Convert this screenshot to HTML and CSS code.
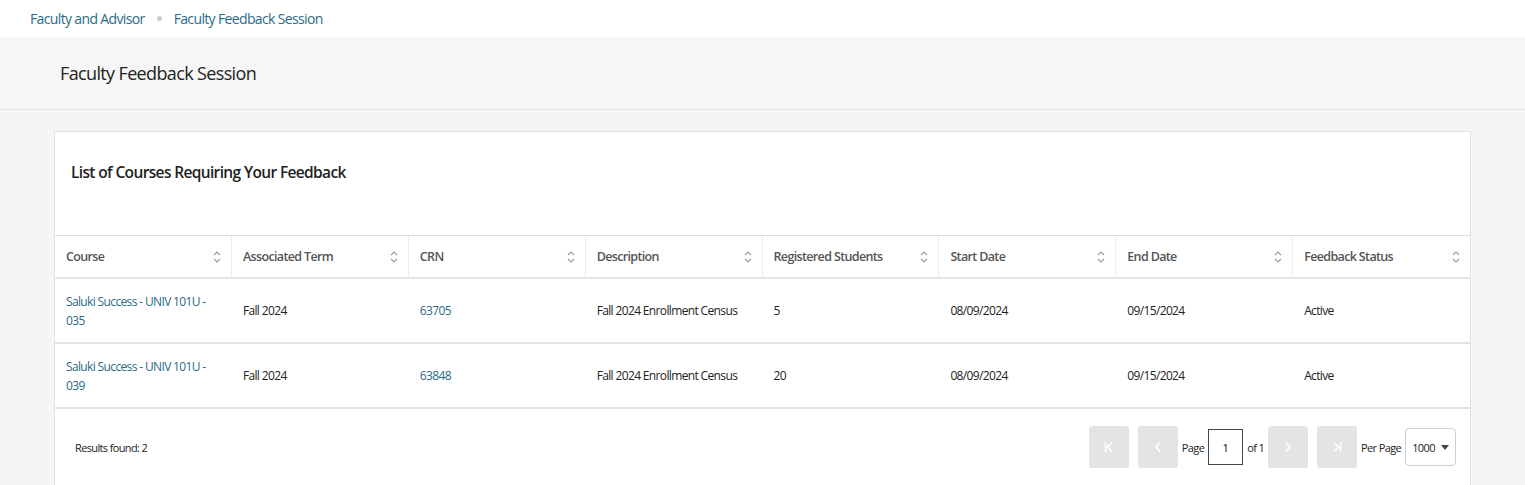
FILE: index.html
```html
<!DOCTYPE html>
<html lang="en">
<head>
    <meta charset="UTF-8">
    <meta name="viewport" content="width=device-width, initial-scale=1.0">
    <title>Faculty Feedback Session</title>
    <link rel="stylesheet" href="styles.css">
</head>
<body>
    <nav class="breadcrumb">
        <a href="#" class="crumb">Faculty and Advisor</a>
        <span class="crumb-dot"></span>
        <span class="crumb">Faculty Feedback Session</span>
    </nav>

    <header class="page-header">
        <h1 class="page-title">Faculty Feedback Session</h1>
    </header>

    <main class="content">
        <section class="card">
            <div class="card-header">
                <h2 class="card-title">List of Courses Requiring Your Feedback</h2>
            </div>

            <table class="grid">
                <thead>
                    <tr>
                        <th><div class="th-inner">Course<span class="sort"></span></div></th>
                        <th><div class="th-inner">Associated Term<span class="sort"></span></div></th>
                        <th><div class="th-inner">CRN<span class="sort"></span></div></th>
                        <th><div class="th-inner">Description<span class="sort"></span></div></th>
                        <th><div class="th-inner">Registered Students<span class="sort"></span></div></th>
                        <th><div class="th-inner">Start Date<span class="sort"></span></div></th>
                        <th><div class="th-inner">End Date<span class="sort"></span></div></th>
                        <th><div class="th-inner last">Feedback Status<span class="sort"></span></div></th>
                    </tr>
                </thead>
                <tbody>
                    <tr>
                        <td><a href="#" class="link">Saluki Success - UNIV 101U - 035</a></td>
                        <td>Fall 2024</td>
                        <td><a href="#" class="link">63705</a></td>
                        <td>Fall 2024 Enrollment Census</td>
                        <td>5</td>
                        <td>08/09/2024</td>
                        <td>09/15/2024</td>
                        <td>Active</td>
                    </tr>
                    <tr>
                        <td><a href="#" class="link">Saluki Success - UNIV 101U - 039</a></td>
                        <td>Fall 2024</td>
                        <td><a href="#" class="link">63848</a></td>
                        <td>Fall 2024 Enrollment Census</td>
                        <td>20</td>
                        <td>08/09/2024</td>
                        <td>09/15/2024</td>
                        <td>Active</td>
                    </tr>
                </tbody>
            </table>

            <div class="card-footer">
                <span class="results">Results found: 2</span>
                <div class="pager">
                    <button class="pg-btn" disabled>
                        <svg width="10" height="12" viewBox="0 0 10 12"><path d="M1.5 1v10M8 1.5L3.5 6L8 10.5" fill="none" stroke="#fff" stroke-width="1.6"/></svg>
                    </button>
                    <button class="pg-btn" disabled>
                        <svg width="8" height="12" viewBox="0 0 8 12"><path d="M6 1.5L2 6l4 4.5" fill="none" stroke="#fff" stroke-width="1.6"/></svg>
                    </button>
                    <span class="pg-label">Page</span>
                    <input type="text" class="pg-input" value="1">
                    <span class="pg-label">of 1</span>
                    <button class="pg-btn" disabled>
                        <svg width="8" height="12" viewBox="0 0 8 12"><path d="M2 1.5L6 6l-4 4.5" fill="none" stroke="#fff" stroke-width="1.6"/></svg>
                    </button>
                    <button class="pg-btn" disabled>
                        <svg width="10" height="12" viewBox="0 0 10 12"><path d="M8.5 1v10M2 1.5L6.5 6L2 10.5" fill="none" stroke="#fff" stroke-width="1.6"/></svg>
                    </button>
                    <span class="pg-label">Per Page</span>
                    <div class="pg-select">1000<span class="caret"></span></div>
                </div>
            </div>
        </section>
    </main>
</body>
</html>
```

FILE: styles.css
```css
body {
    margin: 0;
    background-color: #f4f5f5;
    font-family: "Open Sans", "Noto Sans", Arial, sans-serif;
    color: #222;
    letter-spacing: -0.04em;
}
.breadcrumb {
    height: 37px;
    display: flex;
    align-items: center;
    gap: 12px;
    padding-left: 30px;
    background-color: #fff;
    font-size: 14px;
}
.crumb {
    color: #2a6b86;
    text-decoration: none;
}
.crumb-dot {
    width: 5px;
    height: 5px;
    border-radius: 50%;
    background-color: #ccc;
}
.page-header {
    height: 72px;
    display: flex;
    align-items: center;
    padding-left: 60px;
    background-color: #f6f6f6;
    border-bottom: 1px solid #e3e3e3;
}
.page-title {
    margin: 0;
    font-size: 18px;
    font-weight: 400;
    color: #222;
}
.content {
    padding: 21px 54px 0;
}
.card {
    background-color: #fff;
    border: 1px solid #e2e2e2;
    border-bottom: none;
}
.card-header {
    height: 103px;
    padding: 29px 16px 0;
    box-sizing: border-box;
}
.card-title {
    margin: 0;
    font-size: 15.5px;
    font-weight: 600;
    color: #222;
}
.grid {
    width: 100%;
    border-collapse: collapse;
    table-layout: fixed;
    font-size: 12px;
}
.grid thead tr {
    border-top: 1px solid #dcdcdc;
    border-bottom: 2px solid #e6e6e6;
}
.grid th {
    height: 41px;
    padding: 0;
    text-align: left;
    font-weight: 600;
    color: #555;
    font-size: 12.5px;
}
.th-inner {
    display: flex;
    align-items: center;
    justify-content: space-between;
    height: 41px;
    padding: 0 10px 0 11px;
    border-right: 1px solid #ececec;
}
.th-inner.last {
    border-right: none;
}
.sort {
    width: 8px;
    height: 14px;
    background-image: url("data:image/svg+xml;utf8,<svg xmlns='http://www.w3.org/2000/svg' width='8' height='14' viewBox='0 0 8 14'><path d='M1 5l3-3 3 3M1 9l3 3 3-3' fill='none' stroke='%23999' stroke-width='1.1'/></svg>");
}
.grid td {
    height: 63px;
    padding: 0 11px;
    line-height: 19px;
    color: #222;
}
.grid tbody tr {
    border-bottom: 2px solid #e2e2e2;
}
.link {
    color: #2a6b86;
    text-decoration: none;
}
.card-footer {
    display: flex;
    align-items: center;
    justify-content: space-between;
    padding: 17px 14px 30px 20px;
}
.results {
    font-size: 11px;
    color: #222;
}
.pager {
    display: flex;
    align-items: center;
    gap: 4px;
    font-size: 11px;
}
.pg-btn {
    width: 40px;
    height: 42px;
    border: none;
    border-radius: 3px;
    background-color: #e4e4e4;
    display: flex;
    align-items: center;
    justify-content: center;
    padding: 0;
    margin: 0;
}
.pg-btn + .pg-btn {
    margin-left: 5px;
}
.pg-label {
    color: #222;
}
.pg-input {
    width: 35px;
    height: 36px;
    box-sizing: border-box;
    border: 1px solid #3c4a4f;
    text-align: center;
    font-size: 11px;
    font-family: inherit;
    padding: 0;
}
.pg-select {
    width: 51px;
    height: 38px;
    box-sizing: border-box;
    border: 1px solid #cfcfcf;
    border-radius: 4px;
    display: flex;
    align-items: center;
    justify-content: center;
    gap: 6px;
    font-size: 11px;
}
.caret {
    width: 0;
    height: 0;
    border-left: 4px solid transparent;
    border-right: 4px solid transparent;
    border-top: 5px solid #444;
}
```
